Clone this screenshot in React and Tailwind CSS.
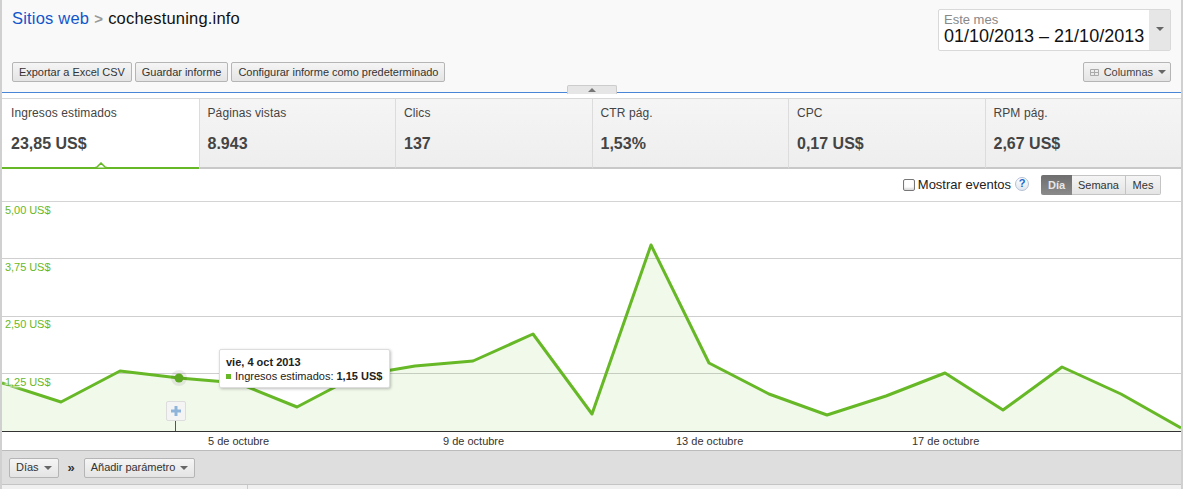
const tabs = [
  { label: 'Ingresos estimados', value: '23,85 US$', active: true },
  { label: 'Páginas vistas', value: '8.943' },
  { label: 'Clics', value: '137' },
  { label: 'CTR pág.', value: '1,53%' },
  { label: 'CPC', value: '0,17 US$' },
  { label: 'RPM pág.', value: '2,67 US$' },
]

const yLabels = [
  { text: '5,00 US$', cls: 'top-[2px]' },
  { text: '3,75 US$', cls: 'top-[59px]' },
  { text: '2,50 US$', cls: 'top-[116px]' },
  { text: '1,25 US$', cls: 'top-[174px]' },
]

const xLabels = [
  { text: '5 de octubre', cls: 'left-[206px]' },
  { text: '9 de octubre', cls: 'left-[441px]' },
  { text: '13 de octubre', cls: 'left-[674px]' },
  { text: '17 de octubre', cls: 'left-[910px]' },
]

// chart points, relative to the plot box
const points = [
  [0, 181], [59, 200], [118, 169], [177, 176], [236, 181], [295, 205], [354, 174],
  [413, 164], [471, 159], [531, 132], [590, 212], [649, 43], [707, 161], [767, 192],
  [825, 213], [884, 194], [943, 171], [1001, 208], [1060, 165], [1119, 192], [1179, 226],
]
const line = points.map((p) => p.join(',')).join(' ')

const Caret = ({ className = 'border-t-[#666]' }) => (
  <span className={`inline-block w-0 h-0 border-x-[4px] border-x-transparent border-t-[4px] ${className}`}></span>
)

const Button = ({ children, className = '' }) => (
  <button className={`h-[20px] px-[6px] flex items-center gap-[5px] text-[11px] tracking-[-0.03px] text-[#333] rounded-[2px] border border-[#b5b5b5] bg-gradient-to-b from-[#f5f5f5] to-[#e4e4e4] ${className}`}>
    {children}
  </button>
)

const App = () => {
  return (
    <div className="w-[1183px] h-[489px] overflow-hidden bg-white border-x-2 border-[#d0d0d0] font-['Liberation_Sans',Arial,sans-serif] text-[#333]">
      {/* Header */}
      <div className="relative h-[93px] bg-[#f9f9f9] border-b border-[#4a86d8]">
        <div className="flex h-full flex-col justify-between pl-[10px] pr-[10px] pb-[10px]">
          <div className="flex justify-between pt-[9px]">
            <h1 className="text-[16.5px] leading-[19px] tracking-[0.2px] text-[#111] whitespace-nowrap">
              <span className="text-[#1155cc]">Sitios web</span>
              <span className="px-[5px] text-[15px] font-bold text-[#999]">&gt;</span>
              cochestuning.info
            </h1>
            <div className="flex h-[42px] w-[233px] rounded-[2px] border border-[#d9d9d9] bg-white">
              <div className="flex-1 pl-[5px] pt-[3px]">
                <div className="text-[13px] leading-[13px] text-[#888]">Este mes</div>
                <div className="text-[18px] leading-[21px] whitespace-nowrap text-[#111]">01/10/2013 – 21/10/2013</div>
              </div>
              <div className="w-[21px] flex justify-center pt-[17px] bg-[#e6e6e6]">
                <Caret />
              </div>
            </div>
          </div>
          <div className="flex justify-between">
            <div className="flex gap-[3px]">
              <Button>Exportar a Excel CSV</Button>
              <Button>Guardar informe</Button>
              <Button>Configurar informe como predeterminado</Button>
            </div>
            <Button className="gap-[4px] pl-[6px] pr-[4px] text-[#444]">
              <svg width="9" height="7" viewBox="0 0 9 7" fill="none" stroke="#aaa">
                <path d="M.5.5h8v6h-8zM.5 3.500h8M4.500 .5v6" />
              </svg>
              Columnas
              <Caret />
            </Button>
          </div>
        </div>
        {/* collapse handle */}
        <div className="absolute left-[565px] bottom-[-2px] flex h-[9px] w-[50px] justify-center rounded-t-[2px] border border-b-0 border-[#ccc] bg-[#e6e6e6] pt-[2px]">
          <span className="h-0 w-0 border-x-[4px] border-x-transparent border-b-[4px] border-b-[#777]"></span>
        </div>
      </div>

      {/* Metric tabs */}
      <div className="mt-[5px] flex h-[71px] border-t border-[#d8d8d8]">
        {tabs.map((tab) => (
          <div
            key={tab.label}
            className={`relative w-[196.5px] pt-[7px] ${
              tab.active
                ? 'pl-[9px] bg-white border-b-2 border-[#67b826]'
                : 'pl-[8px] bg-gradient-to-b from-[#f5f5f5] to-[#eeeeee] border-l border-b-2 border-l-[#dcdcdc] border-b-[#c8c8c8]'
            }`}
          >
            <div className="text-[12px] leading-[15px] tracking-[0.1px] text-[#444]">{tab.label}</div>
            <div className="mt-[14px] text-[16px] leading-[18px] font-bold text-[#444]">{tab.value}</div>
            {tab.active && (
              <svg className="absolute bottom-[-2px] left-[93px]" width="12" height="7" viewBox="0 0 12 7">
                <path d="M0 5.500h1.500L6 1l4.500 4.500H12" fill="#fff" stroke="#67b826" strokeWidth="1.500" />
              </svg>
            )}
          </div>
        ))}
      </div>

      {/* Chart controls */}
      <div className="flex h-[33px] items-center justify-end border-b border-[#d4d4d4] pr-[20px]">
        <span className="h-[12px] w-[12px] rounded-[2px] border border-[#777] bg-white shadow-[inset_0_-2px_2px_#ddd]"></span>
        <span className="ml-[3px] text-[13px] text-[#222]">Mostrar eventos</span>
        <span className="ml-[4px] mb-[3px] flex h-[14px] w-[14px] items-center justify-center rounded-full border border-[#b4c0d4] bg-gradient-to-b from-white to-[#dfe6f0] text-[11px] font-bold text-[#1a66cc]">?</span>
        <div className="ml-[12px] flex h-[20px] text-[11px]">
          <span className="flex w-[31px] items-center justify-center rounded-l-[2px] bg-gradient-to-b from-[#6e6e6e] to-[#8a8a8a] font-bold text-[#e8e8e8]">Día</span>
          <span className="flex w-[54px] items-center justify-center border-y border-r border-[#c4c4c4] bg-gradient-to-b from-[#f5f5f5] to-[#e4e4e4]">Semana</span>
          <span className="flex w-[35px] items-center justify-center rounded-r-[2px] border-y border-r border-[#c4c4c4] bg-gradient-to-b from-[#f5f5f5] to-[#e4e4e4]">Mes</span>
        </div>
      </div>

      {/* Chart */}
      <div className="relative h-[230px] border-b border-[#333]">
        <svg className="block" width="1179" height="229" viewBox="0 0 1179 229">
          {[56.5, 114.5, 171.5].map((y) => (
            <line key={y} x1="0" x2="1179" y1={y} y2={y} stroke="#cfcfcf" />
          ))}
          <polygon points={`0,229 ${line} 1179,229`} fill="#67b826" fillOpacity="0.09" />
          <polyline points={line} fill="none" stroke="#67b826" strokeWidth="3" strokeLinejoin="round" />
          <circle cx="177" cy="176" r="8" fill="#000" fillOpacity="0.07" />
          <circle cx="177" cy="176" r="4.500" fill="#5da823" />
          <line x1="173.500" x2="173.500" y1="219" y2="229" stroke="#555" />
        </svg>
        {yLabels.map((l) => (
          <span
            key={l.text}
            className={`absolute left-[3px] text-[11px] leading-[13px] tracking-[-0.05px] text-[#67b826] [text-shadow:0_0_3px_#fff,0_0_3px_#fff,0_0_3px_#fff,0_0_4px_#fff,0_0_4px_#fff] ${l.cls}`}
          >
            {l.text}
          </span>
        ))}
        {/* annotation button */}
        <div className="absolute left-[164px] top-[199px] flex h-[20px] w-[20px] items-center justify-center rounded-[2px] border border-[#ddd] bg-[#f4f4f4]">
          <svg width="12" height="12" viewBox="0 0 12 12">
            <path d="M4.500 1h3v3.500H11v3H7.500V11h-3V7.500H1v-3h3.500z" fill="#8fb4d9" />
          </svg>
        </div>
        {/* tooltip */}
        <div className="absolute left-[217px] top-[147px] h-[39px] w-[171px] rounded-[2px] border border-[#ddd] bg-white pl-[6px] pt-[5px] text-[11px] leading-[14px] text-[#222] shadow-[1px_1px_3px_rgba(0,0,0,0.25)]">
          <div className="font-bold">vie, 4 oct 2013</div>
          <div className="flex items-center whitespace-nowrap">
            <span className="mr-[4px] h-[5px] w-[5px] bg-[#67b826]"></span>
            Ingresos estimados:&nbsp;<b>1,15 US$</b>
          </div>
        </div>
      </div>

      {/* X axis */}
      <div className="relative h-[19px] border-b border-[#bbb]">
        {xLabels.map((l) => (
          <span key={l.text} className={`absolute top-[3px] text-[11px] leading-[13px] text-[#333] ${l.cls}`}>{l.text}</span>
        ))}
      </div>

      {/* Dimensions bar */}
      <div className="flex h-[34px] items-center border-b border-[#c4c4c4] bg-[#dedede] pl-[7px]">
        <Button>Días <Caret /></Button>
        <span className="ml-[9px] mr-[9px] text-[13px] font-bold text-[#333]">»</span>
        <Button>Añadir parámetro <Caret /></Button>
      </div>
      <div className="h-[4px] bg-[#f0f0f0]">
        <div className="h-full w-[246px] border-r border-[#ccc]"></div>
      </div>
    </div>
  )
}

export default App
